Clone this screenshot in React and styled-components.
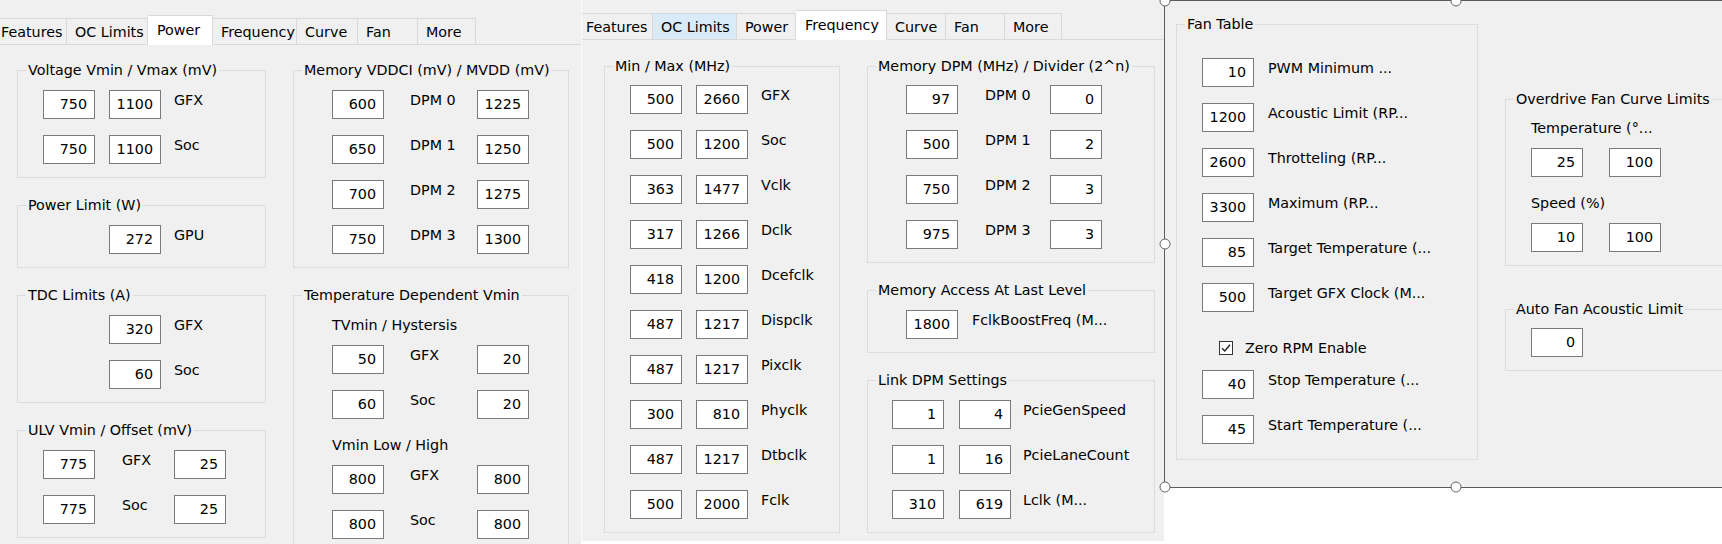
import React from 'react';
import styled, { createGlobalStyle } from 'styled-components';

const GlobalStyle = createGlobalStyle`
  html, body { margin: 0; padding: 0; }
  body {
    background: #ffffff;
    color: #000;
    font-family: "DejaVu Sans", "Liberation Sans", sans-serif;
    font-size: 14.3px;
  }
  #root { width: 1722px; height: 544px; overflow: hidden; }
`;

const Screen = styled.div`
  display: flex;
  width: 1722px;
  height: 544px;
  overflow: hidden;
  background: #fff;
`;

/* ---------- tab control ---------- */

const TabbedPane = styled.section`
  flex: none;
  width: ${p => p.$width}px;
  height: 100%;
  display: flex;
  flex-direction: column;
  box-sizing: border-box;
  background: ${p => p.$base};
  border-left: ${p => (p.$edge ? `1px solid ${p.$edge}` : 'none')};
  overflow: hidden;
`;

const TabStrip = styled.div`
  flex: none;
  padding-top: ${p => p.$top}px;
  background: #f0f0f0;
  border-bottom: 1px solid #d9d9d9;
`;

const TabRow = styled.div`
  display: flex;
  align-items: flex-end;
  margin-left: ${p => p.$shift}px;
`;

const Tab = styled.div`
  flex: none;
  position: relative;
  box-sizing: border-box;
  width: ${p => p.$w}px;
  height: ${p => (p.$active ? 30 : 26)}px;
  margin-bottom: ${p => (p.$active ? -1 : 0)}px;
  z-index: ${p => (p.$active ? 1 : 0)};
  padding: ${p => (p.$active ? '0 0 0 9px' : '2px 0 0 8px')};
  line-height: ${p => (p.$active ? 28 : 23)}px;
  border: 1px solid #d9d9d9;
  border-bottom: none;
  background: ${p => (p.$active ? '#ffffff' : p.$hover ? '#d9eaf9' : '#f0f0f0')};
  white-space: nowrap;
  overflow: hidden;
  & + & { border-left: none; }
`;

const Page = styled.div`
  flex: ${p => (p.$height ? 'none' : '1')};
  height: ${p => (p.$height ? `${p.$height}px` : 'auto')};
  display: flex;
  align-items: flex-start;
  gap: 27px;
  padding: ${p => p.$pad};
  background: #f0f0f0;
  box-sizing: border-box;
`;

const Column = styled.div`
  flex: none;
  width: ${p => p.$w}px;
  display: flex;
  flex-direction: column;
  gap: ${p => p.$gap ?? 19}px;
  margin-top: ${p => p.$top ?? 0}px;
`;

/* ---------- group boxes ---------- */

const Frame = styled.fieldset`
  margin: 0;
  padding: 0;
  min-width: 0;
  box-sizing: border-box;
  width: 100%;
  border: 1px solid #dcdcdc;
`;

const Legend = styled.legend`
  margin-left: 8px;
  padding: 0 2px;
  line-height: 16px;
  white-space: nowrap;
`;

const Body = styled.div`
  display: flex;
  flex-direction: column;
  gap: 16px;
  padding: ${p => p.$pt}px 0 ${p => p.$pb}px ${p => p.$pl}px;
`;

const Row = styled.div`
  display: grid;
  grid-template-columns: ${p => p.$cols};
  align-items: start;
`;

const Field = styled.span`
  display: block;
  box-sizing: border-box;
  width: 52px;
  height: 29px;
  padding-right: 7px;
  border: 1px solid #7a7a7a;
  background: #fff;
  text-align: right;
  line-height: 27px;
`;

const Caption = styled.span`
  display: block;
  padding-top: 2px;
  line-height: 17px;
  white-space: nowrap;
`;

const SubHead = styled.div`
  margin-top: ${p => p.$mt}px;
  margin-bottom: -5px;
  line-height: 17px;
  white-space: nowrap;
`;

const CheckRow = styled.label`
  display: flex;
  align-items: center;
  gap: 12px;
  height: 12px;
  margin-top: 14px;
  padding-left: 17px;
  line-height: 17px;
  white-space: nowrap;
`;

const CheckBox = () => (
  <svg width="14" height="14" viewBox="0 0 14 14" aria-hidden="true">
    <rect x="0.5" y="0.5" width="13" height="13" fill="#fff" stroke="#333" />
    <path d="M3 7.2 L5.8 10 L11 3.8" fill="none" stroke="#222" strokeWidth="1.4" />
  </svg>
);

function Cell({ value }) {
  if (value === null) return <span />;
  if (typeof value === 'number') return <Field>{value}</Field>;
  return <Caption>{value}</Caption>;
}

function Group({ title, cols, pl, pt = 12, pb = 13, rows }) {
  return (
    <Frame>
      <Legend>{title}</Legend>
      <Body $pl={pl} $pt={pt} $pb={pb}>
        {rows.map((r, i) => {
          if (r.head) return <SubHead key={i} $mt={r.mt}>{r.head}</SubHead>;
          if (r.check)
            return (
              <CheckRow key={i}>
                <CheckBox />
                <span>{r.check}</span>
              </CheckRow>
            );
          return (
            <Row key={i} $cols={cols}>
              {r.map((v, j) => <Cell key={j} value={v} />)}
            </Row>
          );
        })}
      </Body>
    </Frame>
  );
}

function Tabs({ top, shift, items, active, hover }) {
  return (
    <TabStrip $top={top}>
      <TabRow $shift={shift}>
        {items.map(([name, w]) => (
          <Tab key={name} $w={w} $active={name === active} $hover={name === hover}>
            {name}
          </Tab>
        ))}
      </TabRow>
    </TabStrip>
  );
}

/* ---------- designer surface ---------- */

const Designer = styled.section`
  flex: none;
  width: 558px;
  height: 100%;
  background: #fff;
`;

const FormFrame = styled.div`
  position: relative;
  box-sizing: border-box;
  width: 584px;
  height: 488px;
  border: 1px solid #5c5c5c;
  background: #f0f0f0;
  display: flex;
  align-items: flex-start;
  gap: 27px;
  padding: 15px 0 0 11px;
`;

const Handle = styled.span`
  position: absolute;
  left: calc(${p => p.$x} - 0.5px);
  top: calc(${p => p.$y} - 0.5px);
  width: 11px;
  height: 11px;
  box-sizing: border-box;
  border-radius: 50%;
  border: 1.5px solid #666;
  background: #fff;
  transform: translate(-50%, -50%);
  z-index: 2;
`;

const HANDLES = [
  ['0%', '0%'], ['50%', '0%'], ['100%', '0%'],
  ['0%', '50%'], ['100%', '50%'],
  ['0%', '100%'], ['50%', '100%'], ['100%', '100%'],
];

/* ---------- content ---------- */

const LEFT_TABS = [
  ['Features', 75], ['OC Limits', 81], ['Power', 65], ['Frequency', 84],
  ['Curve', 61], ['Fan', 60], ['More', 58],
];

const MID_TABS = [
  ['Features', 76], ['OC Limits', 84], ['Power', 59], ['Frequency', 91],
  ['Curve', 59], ['Fan', 59], ['More', 57],
];

export default function App() {
  return (
    <>
      <GlobalStyle />
      <Screen>
        {/* Power page */}
        <TabbedPane $width={581} $base="#f0f0f0">
          <Tabs top={15} shift={-8} items={LEFT_TABS} active="Power" />
          <Page $pad="17px 0 0 17px">
            <Column $w={249}>
              <Group
                title="Voltage Vmin / Vmax (mV)"
                cols="66px 65px 1fr"
                pl={25}
                rows={[[750, 1100, 'GFX'], [750, 1100, 'Soc']]}
              />
              <Group
                title="Power Limit (W)"
                cols="66px 65px 1fr"
                pl={25}
                rows={[[null, 272, 'GPU']]}
              />
              <Group
                title="TDC Limits (A)"
                cols="66px 65px 1fr"
                pl={25}
                rows={[[null, 320, 'GFX'], [null, 60, 'Soc']]}
              />
              <Group
                title="ULV Vmin / Offset (mV)"
                cols="79px 52px 1fr"
                pl={25}
                rows={[[775, 'GFX', 25], [775, 'Soc', 25]]}
              />
            </Column>
            <Column $w={276}>
              <Group
                title="Memory VDDCI (mV) / MVDD (mV)"
                cols="78px 67px 1fr"
                pl={38}
                rows={[
                  [600, 'DPM 0', 1225],
                  [650, 'DPM 1', 1250],
                  [700, 'DPM 2', 1275],
                  [750, 'DPM 3', 1300],
                ]}
              />
              <Group
                title="Temperature Dependent Vmin"
                cols="78px 67px 1fr"
                pl={38}
                rows={[
                  { head: 'TVmin / Hystersis', mt: 2 },
                  [50, 'GFX', 20],
                  [60, 'Soc', 20],
                  { head: 'Vmin Low / High', mt: 2 },
                  [800, 'GFX', 800],
                  [800, 'Soc', 800],
                ]}
              />
            </Column>
          </Page>
        </TabbedPane>

        {/* Frequency page */}
        <TabbedPane $width={583} $base="#ffffff" $edge="#fbfbfb">
          <Tabs top={10} shift={-5} items={MID_TABS} active="Frequency" hover="OC Limits" />
          <Page $pad="18px 0 0 22px" $height={501}>
            <Column $w={236}>
              <Group
                title="Min / Max (MHz)"
                cols="66px 65px 1fr"
                pl={25}
                pt={11}
                rows={[
                  [500, 2660, 'GFX'],
                  [500, 1200, 'Soc'],
                  [363, 1477, 'Vclk'],
                  [317, 1266, 'Dclk'],
                  [418, 1200, 'Dcefclk'],
                  [487, 1217, 'Dispclk'],
                  [487, 1217, 'Pixclk'],
                  [300, 810, 'Phyclk'],
                  [487, 1217, 'Dtbclk'],
                  [500, 2000, 'Fclk'],
                ]}
              />
            </Column>
            <Column $w={288}>
              <Group
                title="Memory DPM (MHz) / Divider (2^n)"
                cols="79px 65px 1fr"
                pl={38}
                pt={11}
                rows={[
                  [97, 'DPM 0', 0],
                  [500, 'DPM 1', 2],
                  [750, 'DPM 2', 3],
                  [975, 'DPM 3', 3],
                ]}
              />
              <Group
                title="Memory Access At Last Level"
                cols="66px 1fr"
                pl={38}
                rows={[[1800, 'FclkBoostFreq (M...']]}
              />
              <Group
                title="Link DPM Settings"
                cols="67px 64px 1fr"
                pl={24}
                rows={[
                  [1, 4, 'PcieGenSpeed'],
                  [1, 16, 'PcieLaneCount'],
                  [310, 619, 'Lclk (M...'],
                ]}
              />
            </Column>
          </Page>
        </TabbedPane>

        {/* Fan form in the designer */}
        <Designer>
          <FormFrame>
            {HANDLES.map(([x, y]) => (
              <Handle key={x + y} $x={x} $y={y} />
            ))}
            <Column $w={302}>
              <Group
                title="Fan Table"
                cols="66px 1fr"
                pl={25}
                pt={26}
                pb={15}
                rows={[
                  [10, 'PWM Minimum ...'],
                  [1200, 'Acoustic Limit (RP...'],
                  [2600, 'Throtteling (RP...'],
                  [3300, 'Maximum (RP...'],
                  [85, 'Target Temperature (...'],
                  [500, 'Target GFX Clock (M...'],
                  { check: 'Zero RPM Enable' },
                  [40, 'Stop Temperature (...'],
                  [45, 'Start Temperature (...'],
                ]}
              />
            </Column>
            <Column $w={240} $top={75} $gap={35}>
              <Group
                title="Overdrive Fan Curve Limits"
                cols="78px 1fr"
                pl={25}
                rows={[
                  { head: 'Temperature (°...', mt: 1 },
                  [25, 100],
                  { head: 'Speed (%)', mt: 2 },
                  [10, 100],
                ]}
              />
              <Group
                title="Auto Fan Acoustic Limit"
                cols="52px"
                pl={25}
                pt={11}
                rows={[[0]]}
              />
            </Column>
          </FormFrame>
        </Designer>
      </Screen>
    </>
  );
}
